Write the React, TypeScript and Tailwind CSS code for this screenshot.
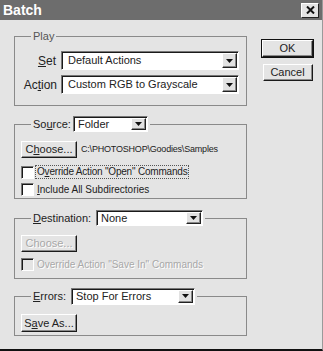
import React from "react";

const font = { fontFamily: '"Liberation Sans", Arial, sans-serif' };

function Arrow() {
  return (
    <div className="ml-auto mr-[1px] flex h-[calc(100%-2px)] w-[15px] items-center justify-center border border-t-white border-l-white border-r-[#222] border-b-[#222] bg-[#e2e2e2] shadow-[inset_-1px_-1px_0_#888]">
      <svg width="7" height="4" viewBox="0 0 7 4">
        <path d="M0 0h7L3.5 4z" fill="#111" />
      </svg>
    </div>
  );
}

function Select({ className, value, pad }: { className: string; value: string; pad?: string }) {
  return (
    <div
      className={`flex items-center bg-white border border-t-[#777] border-l-[#777] border-r-white border-b-white shadow-[inset_1px_1px_0_#1a1a1a] ${className}`}
    >
      <span className={`${pad ?? "pl-[4px]"} text-[11px] leading-none text-[#222] whitespace-nowrap`}>{value}</span>
      <Arrow />
    </div>
  );
}

function Btn({
  children,
  className,
  disabled,
}: {
  children: React.ReactNode;
  className: string;
  disabled?: boolean;
}) {
  return (
    <div
      className={`flex items-center justify-center bg-[#e4e4e4] border border-t-white border-l-white border-r-[#1a1a1a] border-b-[#1a1a1a] shadow-[inset_-1px_-1px_0_#8a8a8a] text-[11px] leading-none ${
        disabled ? "text-[#a8a8a8] [text-shadow:1px_1px_0_#fff]" : "text-[#222]"
      } ${className}`}
    >
      {children}
    </div>
  );
}

function Check({ disabled }: { disabled?: boolean }) {
  return (
    <div
      className={`h-[13px] w-[13px] shrink-0 border border-t-[#777] border-l-[#777] border-r-white border-b-white shadow-[inset_1px_1px_0_#1a1a1a] ${
        disabled ? "bg-[#e4e4e4]" : "bg-white"
      }`}
    />
  );
}

export default function App() {
  return (
    <div
      className="flex h-[351px] w-[323px] flex-col overflow-hidden bg-[#e4e4e4] border-b-2 border-b-[#111] border-r border-r-[#9a9a9a]"
      style={font}
    >
      {/* title bar */}
      <div className="flex h-[20px] shrink-0 items-center justify-between bg-[#6d6d6d] pl-[3px] pr-[3px]">
        <span className="text-[14px] font-bold leading-none text-white">Batch</span>
        <div className="flex h-[15px] w-[18px] items-center justify-center border border-t-white border-l-white border-r-[#222] border-b-[#222] bg-[#e4e4e4]">
          <svg width="9" height="8" viewBox="0 0 9 8">
            <path d="M1 0.5L8 7.5M8 0.5L1 7.5" stroke="#111" strokeWidth="2" />
          </svg>
        </div>
      </div>

      <div className="flex pl-[14px] pt-[9px]">
        {/* left column */}
        <div className="flex w-[233px] flex-col">
          {/* Play */}
          <fieldset className="border border-[#8a8a8a] pb-[11px]">
            <legend className="ml-[16px] h-[14px] px-[2px] text-[11px] leading-[14px] text-[#555]">
              Play
            </legend>
            <div className="mt-[8px] flex items-center">
              <span className="w-[46px] pr-[5px] text-right text-[12px] leading-none text-[#222]">
                <span className="underline">S</span>et
              </span>
              <Select className="h-[19px] w-[178px]" pad="pl-[6px]" value="Default Actions" />
            </div>
            <div className="mt-[5px] flex items-center">
              <span className="w-[46px] pr-[4px] text-right text-[12px] leading-none text-[#222]">
                Ac<span className="underline">t</span>ion
              </span>
              <Select className="h-[19px] w-[178px]" pad="pl-[6px]" value="Custom RGB to Grayscale" />
            </div>
          </fieldset>

          {/* Source */}
          <fieldset className="mt-[10px] border border-[#8a8a8a] pb-[2px]">
            <legend className="ml-[16px] flex h-[16px] items-center px-[2px]">
              <span className="w-[40px] text-[11px] leading-none text-[#222]">
                So<span className="underline">u</span>rce:
              </span>
              <Select className="h-[16px] w-[75px]" value="Folder" />
            </legend>
            <div className="mt-[9px] flex items-center pl-[6px]">
              <Btn className="h-[17px] w-[56px]">
                C<span className="underline">h</span>oose...
              </Btn>
              <span className="ml-[4px] text-[9px] leading-none tracking-[-0.2px] text-[#222]">
                C:\PHOTOSHOP\Goodies\Samples
              </span>
            </div>
            <div className="mt-[7px] flex items-center pl-[6px]">
              <Check />
              <span className="ml-[1px] border border-dotted border-[#555] px-[1px] text-[10px] leading-[12px] tracking-[-0.2px] text-[#222]">
                O<span className="underline">v</span>erride Action "Open" Commands
              </span>
            </div>
            <div className="mt-[4px] flex items-center pl-[6px]">
              <Check />
              <span className="ml-[3px] text-[10px] leading-[12px] text-[#222]">
                <span className="underline">I</span>nclude All Subdirectories
              </span>
            </div>
          </fieldset>

          {/* Destination */}
          <fieldset className="mt-[11px] border border-[#8a8a8a] pb-[7px]">
            <legend className="ml-[16px] flex h-[16px] items-center px-[2px]">
              <span className="w-[63px] text-[11px] leading-none text-[#222]">
                <span className="underline">D</span>estination:
              </span>
              <Select className="h-[16px] w-[107px]" value="None" />
            </legend>
            <div className="mt-[9px] flex items-center pl-[6px]">
              <Btn className="h-[17px] w-[56px]" disabled>
                Choose...
              </Btn>
            </div>
            <div className="mt-[6px] flex items-center pl-[6px]">
              <Check disabled />
              <span className="ml-[3px] text-[10px] leading-[12px] text-[#a8a8a8] [text-shadow:1px_1px_0_#fff]">
                Override Action "Save In" Commands
              </span>
            </div>
          </fieldset>

          {/* Errors */}
          <fieldset className="mt-[9px] border border-[#8a8a8a] pb-[3px]">
            <legend className="ml-[16px] flex h-[16px] items-center px-[2px]">
              <span className="w-[38px] text-[11px] leading-none text-[#222]">
                <span className="underline">E</span>rrors:
              </span>
              <Select className="h-[17px] w-[124px]" value="Stop For Errors" />
            </legend>
            <div className="mt-[10px] flex items-center pl-[6px]">
              <Btn className="h-[18px] w-[56px]">
                S<span className="underline">a</span>ve As...
              </Btn>
            </div>
          </fieldset>
        </div>

        {/* right column */}
        <div className="ml-[14px] mt-[10px] flex w-[53px] flex-col items-center">
          <div className="border border-[#111]">
            <Btn className="h-[17px] w-[51px]">OK</Btn>
          </div>
          <Btn className="mt-[6px] h-[17px] w-[50px]">Cancel</Btn>
        </div>
      </div>
    </div>
  );
}
